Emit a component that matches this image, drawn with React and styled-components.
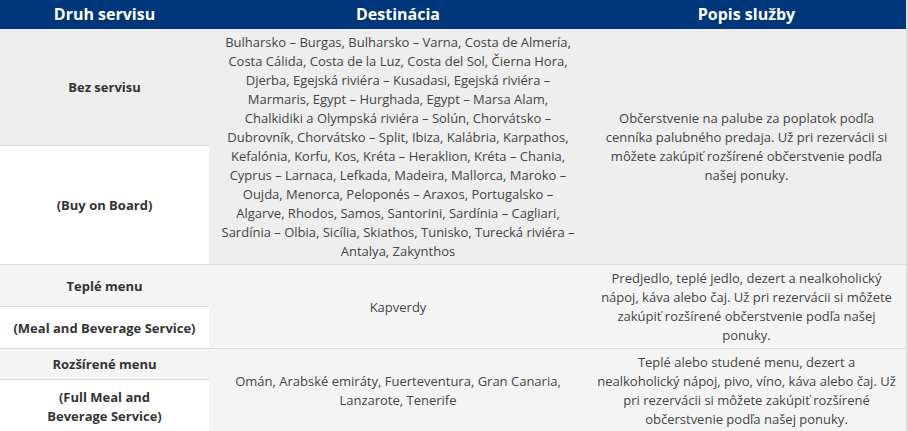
import React from "react";
import styled, { createGlobalStyle } from "styled-components";

const Global = createGlobalStyle`
  html, body { margin: 0; padding: 0; background: #ffffff; }
  body { font-family: "Open Sans", "DejaVu Sans", sans-serif; }
`;

const Wrap = styled.div`
  width: 906px;
  border-right: 2px solid #dcdcdc;
`;

const Table = styled.table`
  width: 906px;
  border-collapse: collapse;
  table-layout: fixed;
  font-family: "Open Sans", sans-serif;
`;

const HeadCell = styled.th`
  background: #00377a;
  color: #ffffff;
  font-size: 16px;
  font-weight: 700;
  line-height: 19px;
  padding: 5px 6px;
  height: 29px;
  box-sizing: border-box;
  text-align: center;
  width: ${(p) => p.$w}px;
`;

const TypeCell = styled.td`
  background: ${(p) => p.$bg};
  color: #333333;
  font-size: 13px;
  font-weight: 700;
  line-height: 19px;
  padding: 4px 6px 3px;
  text-align: center;
  vertical-align: middle;
  border-bottom: 1px solid #dadada;
`;

const TextCell = styled.td`
  background: ${(p) => p.$bg};
  color: #444444;
  font-size: 13px;
  line-height: 19px;
  padding: 4px 6px 3px;
  text-align: center;
  vertical-align: middle;
  border-bottom: 1px solid #dadada;
`;

const Line = styled.span`
  display: block;
  white-space: nowrap;
`;

const Lines = ({ items }) => items.map((t, i) => <Line key={i}>{t}</Line>);

const A = "#eeeeee";
const B = "#f4f4f4";
const W = "#ffffff";

export default function App() {
  return (
    <>
      <Global />
      <Wrap>
        <Table>
          <thead>
            <tr>
              <HeadCell $w={209}>Druh servisu</HeadCell>
              <HeadCell $w={378}>Destinácia</HeadCell>
              <HeadCell $w={319}>Popis služby</HeadCell>
            </tr>
          </thead>
          <tbody>
            <tr>
              <TypeCell $bg={A}>Bez servisu</TypeCell>
              <TextCell $bg={A} rowSpan={2}>
                <Lines
                  items={[
                    "Bulharsko – Burgas, Bulharsko – Varna, Costa de Almería,",
                    "Costa Cálida, Costa de la Luz, Costa del Sol, Čierna Hora,",
                    "Djerba, Egejská riviéra – Kusadasi, Egejská riviéra –",
                    "Marmaris, Egypt – Hurghada, Egypt – Marsa Alam,",
                    "Chalkidiki a Olympská riviéra – Solún, Chorvátsko –",
                    "Dubrovník, Chorvátsko – Split, Ibiza, Kalábria, Karpathos,",
                    "Kefalónia, Korfu, Kos, Kréta – Heraklion, Kréta – Chania,",
                    "Cyprus – Larnaca, Lefkada, Madeira, Mallorca, Maroko –",
                    "Oujda, Menorca, Peloponés – Araxos, Portugalsko –",
                    "Algarve, Rhodos, Samos, Santorini, Sardínia – Cagliari,",
                    "Sardínia – Olbia, Sicília, Skiathos, Tunisko, Turecká riviéra –",
                    "Antalya, Zakynthos",
                  ]}
                />
              </TextCell>
              <TextCell $bg={A} rowSpan={2}>
                <Lines
                  items={[
                    "Občerstvenie na palube za poplatok podľa",
                    "cenníka palubného predaja. Už pri rezervácii si",
                    "môžete zakúpiť rozšírené občerstvenie podľa",
                    "našej ponuky.",
                  ]}
                />
              </TextCell>
            </tr>
            <tr>
              <TypeCell $bg={W}>(Buy on Board)</TypeCell>
            </tr>
            <tr>
              <TypeCell $bg={B}>Teplé menu</TypeCell>
              <TextCell $bg={B} rowSpan={2}>
                Kapverdy
              </TextCell>
              <TextCell $bg={B} rowSpan={2}>
                <Lines
                  items={[
                    "Predjedlo, teplé jedlo, dezert a nealkoholický",
                    "nápoj, káva alebo čaj. Už pri rezervácii si môžete",
                    "zakúpiť rozšírené občerstvenie podľa našej",
                    "ponuky.",
                  ]}
                />
              </TextCell>
            </tr>
            <tr>
              <TypeCell $bg={W}>(Meal and Beverage Service)</TypeCell>
            </tr>
            <tr>
              <TypeCell $bg={B}>Rozšírené menu</TypeCell>
              <TextCell $bg={B} rowSpan={2}>
                <Lines
                  items={[
                    "Omán, Arabské emiráty, Fuerteventura, Gran Canaria,",
                    "Lanzarote, Tenerife",
                  ]}
                />
              </TextCell>
              <TextCell $bg={B} rowSpan={2}>
                <Lines
                  items={[
                    "Teplé alebo studené menu, dezert a",
                    "nealkoholický nápoj, pivo, víno, káva alebo čaj. Už",
                    "pri rezervácii si môžete zakúpiť rozšírené",
                    "občerstvenie podľa našej ponuky.",
                  ]}
                />
              </TextCell>
            </tr>
            <tr>
              <TypeCell $bg={W}>
                <Line>(Full Meal and</Line>
                <Line>Beverage Service)</Line>
              </TypeCell>
            </tr>
          </tbody>
        </Table>
      </Wrap>
    </>
  );
}
